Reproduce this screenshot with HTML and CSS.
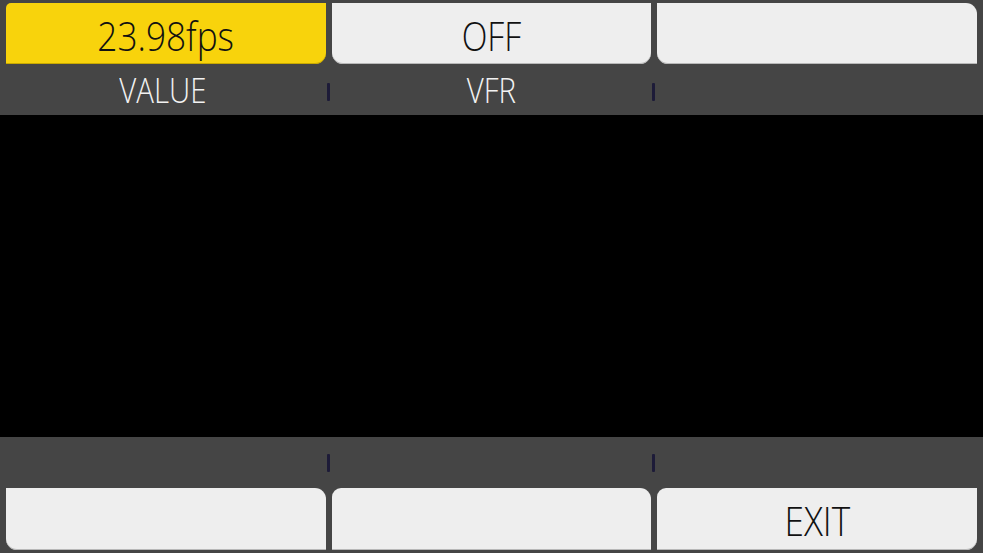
FILE: index.html
```html
<!DOCTYPE html>
<html>
<head>
<meta charset="utf-8">
<link rel="stylesheet" href="styles.css">
</head>
<body>
<div class="screen">
  <div class="panel top">
    <div class="btns">
      <div class="btn yellow r-tl r-br"><span class="txt wide">23.98fps</span></div>
      <div class="btn r-bl r-br"><span class="txt">OFF</span></div>
      <div class="btn r-tr r-bl"></div>
    </div>
    <div class="labels">
      <div class="label first"><span class="txt">VALUE</span></div>
      <div class="tick"></div>
      <div class="label"><span class="txt">VFR</span></div>
      <div class="tick"></div>
      <div class="label"></div>
    </div>
  </div>
  <div class="view"></div>
  <div class="panel bottom">
    <div class="labels">
      <div class="label first"></div>
      <div class="tick"></div>
      <div class="label"></div>
      <div class="tick"></div>
      <div class="label"></div>
    </div>
    <div class="btns">
      <div class="btn r-tr r-bl"></div>
      <div class="btn r-tl r-tr"></div>
      <div class="btn r-tl r-br"><span class="txt wide">EXIT</span></div>
    </div>
  </div>
</div>
</body>
</html>
```

FILE: styles.css
```css
html, body {
  margin: 0;
  padding: 0;
  background: #000;
}
.screen {
  width: 983px;
  height: 553px;
  display: flex;
  flex-direction: column;
  font-family: "Open Sans", "DejaVu Sans", sans-serif;
  overflow: hidden;
}
.panel {
  background: #454545;
  display: flex;
  flex-direction: column;
}
.top {
  height: 115px;
  padding-top: 3px;
  box-sizing: border-box;
}
.view {
  height: 322px;
  background: #000;
}
.bottom {
  height: 116px;
  box-sizing: border-box;
  padding-bottom: 3px;
}
.btns {
  display: flex;
  gap: 6px;
  padding: 0 6px;
  height: 61px;
}
.bottom .btns {
  height: 62px;
}
.btn {
  width: 320px;
  background: #eeeeee;
  box-shadow: inset 0 -1px 0 #b8b8b8;
  display: flex;
  align-items: center;
  justify-content: center;
  color: #111;
  font-size: 40px;
  font-weight: 300;
}
.btn.yellow {
  background: #f8d30c;
  box-shadow: inset 0 -1px 0 #c9a900;
}
.r-tl { border-top-left-radius: 9px; }
.r-tr { border-top-right-radius: 11px; }
.r-bl { border-bottom-left-radius: 11px; }
.r-br { border-bottom-right-radius: 11px; }
.yellow.r-tl { border-top-left-radius: 5px; }
.txt {
  display: inline-block;
  transform: scaleX(0.84);
  line-height: 1;
  padding-top: 4px;
}
.txt.wide {
  transform: scaleX(0.88);
}
.labels {
  flex: 1;
  display: flex;
  align-items: center;
  padding: 0 0 0 6px;
}
.label {
  width: 320px;
  text-align: center;
  color: #f2f2f2;
  font-size: 35px;
  font-weight: 300;
}
.label.first {
  margin-left: -6px;
  width: 326px;
}
.label .txt {
  padding-top: 2px;
}
.tick {
  width: 3px;
  height: 18px;
  margin: 0 1px 0 1px;
  background: #1d1b38;
  border-radius: 1px;
}
.top .tick {
  margin-top: 4px;
}
.bottom .tick {
  margin-top: 0;
}
```
